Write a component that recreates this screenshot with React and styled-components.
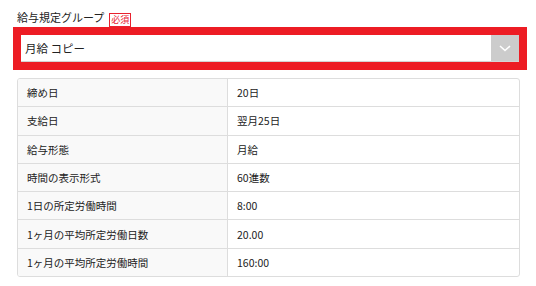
import styled, { createGlobalStyle } from 'styled-components';

const GlobalStyle = createGlobalStyle`
  html, body {
    margin: 0;
    padding: 0;
    background: #fff;
  }
  body {
    font-family: 'Noto Sans CJK JP', 'Noto Sans', sans-serif;
    color: #222;
  }
`;

const rows = [
  { label: '締め日', value: '20日' },
  { label: '支給日', value: '翌月25日' },
  { label: '給与形態', value: '月給' },
  { label: '時間の表示形式', value: '60進数' },
  { label: '1日の所定労働時間', value: '8:00' },
  { label: '1ヶ月の平均所定労働日数', value: '20.00' },
  { label: '1ヶ月の平均所定労働時間', value: '160:00' },
];

function App() {
  return (
    <>
      <GlobalStyle />
      <Page>
        <LabelRow>
          <Label>給与規定グループ</Label>
          <Required>必須</Required>
        </LabelRow>
        <SelectFrame>
          <SelectBox>
            <SelectText>月給 コピー</SelectText>
            <DropButton>
              <svg width='12' height='7' viewBox='0 0 12 7'>
                <path
                  d='M1 1 L6 5.5 L11 1'
                  fill='none'
                  stroke='#fff'
                  strokeWidth='1.6'
                />
              </svg>
            </DropButton>
          </SelectBox>
        </SelectFrame>
        <InfoTable>
          {rows.map((row) => (
            <InfoRow key={row.label}>
              <HeadCell>{row.label}</HeadCell>
              <ValueCell>{row.value}</ValueCell>
            </InfoRow>
          ))}
        </InfoTable>
      </Page>
    </>
  );
}

export default App;

const Page = styled.div`
  width: 503px;
  padding: 10px 16px 0 17px;
`;

const LabelRow = styled.div`
  display: flex;
  align-items: flex-end;
  gap: 5px;
  height: 17px;
`;

const Label = styled.span`
  font-size: 11px;
  line-height: 15px;
  padding-bottom: 2px;
`;

const Required = styled.span`
  box-sizing: border-box;
  height: 14px;
  padding: 0 1px;
  border: 1px solid #e8212e;
  background: #fff;
  color: #e8212e;
  font-size: 9px;
  line-height: 12px;
`;

const SelectFrame = styled.div`
  margin: 0 -7px 0 -4px;
  border: 8px solid #ed1c24;
`;

const SelectBox = styled.div`
  display: flex;
  align-items: center;
  height: 27px;
  box-sizing: border-box;
  background: #fff;
  border-bottom: 1px solid #d4d4d4;
`;

const SelectText = styled.span`
  flex: 1;
  padding-left: 4px;
  font-size: 11.5px;
`;

const DropButton = styled.div`
  display: flex;
  align-items: center;
  justify-content: center;
  width: 28px;
  height: 26px;
  background: #cccccc;
`;

const InfoTable = styled.div`
  margin-top: 8px;
  border: 1px solid #dddddd;
  border-radius: 3px;
  overflow: hidden;
`;

const InfoRow = styled.div`
  display: grid;
  grid-template-columns: 210px 1fr;
  height: 27.3px;
  & + & {
    border-top: 1px solid #dddddd;
  }
`;

const HeadCell = styled.div`
  display: flex;
  align-items: center;
  padding-left: 9px;
  background: #f9f9f9;
  border-right: 1px solid #dddddd;
  font-size: 10.5px;
`;

const ValueCell = styled.div`
  display: flex;
  align-items: center;
  padding-left: 9px;
  font-size: 10.5px;
`;
